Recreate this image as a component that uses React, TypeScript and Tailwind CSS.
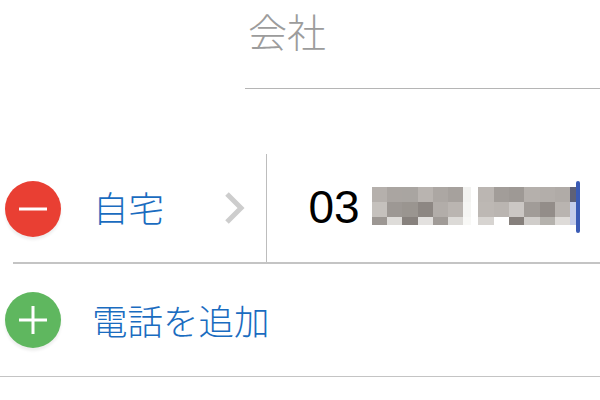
const f = '"Noto Sans CJK JP", "Noto Sans", sans-serif';
const A = [
  ["#b5b0ac","#aaa5a1","#a9a5a1","#b9b4b0","#aca7a3","#a6a19d","#f2f2f0"],
  ["#c5c1bd","#9d9894","#9a9590","#8d8783","#b2ada9","#bab5b1","#f5f5f3"],
  ["#9c9793","#dedcd9","#87817d","#e3e1df","#a09b97","#dcdad7","#f8f8f6"],
];
const B = [
  ["#bbb6b2","#a29d99","#9e9995","#b5b0ac","#b3aeaa","#b0aba7","#5f6177"],
  ["#bdb8b4","#bab5b1","#cbc7c4","#a19c98","#938d89","#b9b4b0","#c5cdea"],
  ["#d7d4d1","#ffffff","#86807c","#d0cdca","#b5b2ad","#dedbd8","#c5cdea"],
];
const hs = ["h-[15px]", "h-[15px]", "h-[8px]"];
function Mosaic({ rows }: { rows: string[][] }) {
  return (
    <div className="flex flex-col">
      {rows.map((r, i) => (
        <div key={i} className={`flex ${hs[i]}`}>
          {r.map((c, j) => (
            <div key={j} className={j === 6 ? "w-[8px] h-full" : "w-[15.3px] h-full"} style={{ backgroundColor: c }} />
          ))}
        </div>
      ))}
    </div>
  );
}
function Bullet({ color, plus }: { color: string; plus?: boolean }) {
  return (
    <div className="w-[56px] h-[56px] rounded-full flex items-center justify-center shrink-0 shadow-[0_3px_3px_rgba(0,0,0,0.07)]" style={{ backgroundColor: color }}>
      <svg width="30" height="44" viewBox="0 0 30 44">
        <rect x="1" y="20.5" width="28" height="3" fill="#fff" />
        {plus && <rect x="13.5" y="8" width="3" height="28" fill="#fff" />}
      </svg>
    </div>
  );
}
export default function App() {
  return (
    <div className="w-[600px] h-[400px] bg-white overflow-hidden flex flex-col" style={{ fontFamily: f }}>
      <div className="ml-[245px] h-[89px] border-b border-[#b5b5b5] pl-[3px] pt-[5px] text-[39px] leading-[50px] font-light text-[#9c9c9c]">
        会社
      </div>
      <div className="h-[65px]" />
      <div className="h-[110px] ml-[13px] border-b-2 border-[#c4c4c4] flex">
        <div className="w-[261.5px] border-r border-[#bdbdbd] flex items-center -ml-[8px]">
          <div className="mt-[1px]"><Bullet color="#e93f33" /></div>
          <span className="ml-[32px] -mt-[3px] text-[35.5px] font-light leading-none text-[#1a6cc0]">自宅</span>
          <svg className="ml-[60px] -mt-[1px]" width="24" height="34" viewBox="0 0 24 34">
            <path d="M3 3 L17 17 L3 31" fill="none" stroke="#cdcdcd" strokeWidth="5" />
          </svg>
        </div>
        <div className="flex items-center pl-[42px]">
          <span className="text-[46px] leading-none text-black -mt-[2px]" style={{ fontFamily: '"Liberation Sans", sans-serif' }}>03</span>
          <div className="ml-[12px] -mt-[5px] flex relative">
            <Mosaic rows={A} />
            <div className="w-[7px]" />
            <Mosaic rows={B} />
            <div className="absolute right-[-1.5px] -top-[6px] w-[4px] h-[52px] rounded-full bg-[#3a5bb5]" />
          </div>
        </div>
      </div>
      <div className="h-[113px] border-b border-[#c4c4c4] flex items-center pl-[5px]">
        <Bullet color="#5fb75f" plus />
        <span className="ml-[31px] text-[35.5px] font-light leading-none text-[#1a6cc0]">電話を追加</span>
      </div>
    </div>
  );
}
